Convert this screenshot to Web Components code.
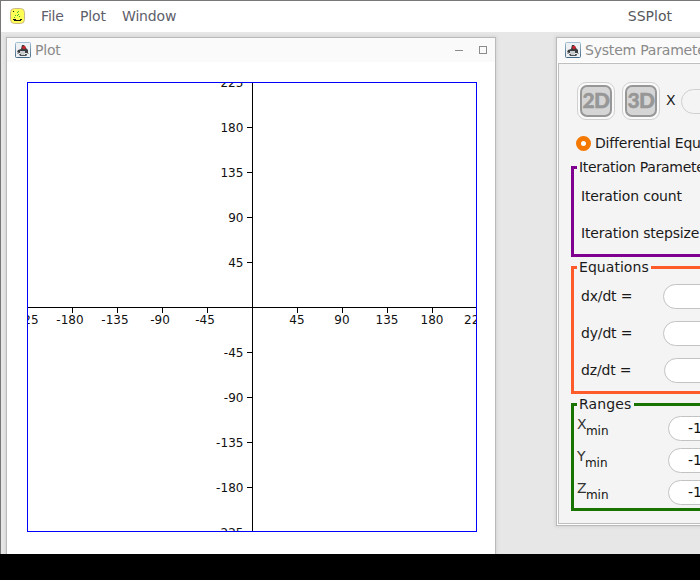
<!DOCTYPE html>
<html lang="en">
<head>
<meta charset="utf-8">
<title>SSPlot</title>
<style>
html, body { margin: 0; height: 580px; overflow: hidden; background: #000; }
body { font: 14px/17px "DejaVu Sans", sans-serif; color: #1a1a1a; }
</style>
</head>
<body>
<ss-app></ss-app>
<script>
const define = (name, html, init) => customElements.define(name, class extends HTMLElement {
  connectedCallback() {
    if (this.shadowRoot) return;
    const root = this.attachShadow({ mode: "open" });
    const t = document.createElement("template");
    t.innerHTML = html;
    root.append(t.content.cloneNode(true));
    if (init) init(this, root);
  }
});

define("ss-logo", `<style>:host{display:block;width:16px;height:16px}svg{display:block}</style>
<svg width="16" height="16" viewBox="0 0 16 16">
<rect x=".5" y=".5" width="14" height="15" rx="4" fill="#ffff56" stroke="#c9b48c"/>
<path d="M3 3h1v1H3zM3 11h3v1h4v-1h2v1h-1v1H4v-1H3z" fill="#111"/>
<path d="M7 4h1v1H7zM8 3h1v1H8zM5 7h1v1H5zM7 7h1v1H7zM9 8h1v1H9zM4 9h1v1H4zM8 6h1v1H8z" fill="#42b82e"/></svg>`);

define("ss-duke", `<style>:host{display:block;width:16px;height:16px}svg{display:block}</style>
<svg width="16" height="16" viewBox="0 0 16 16">
<defs><linearGradient id="g" x2="0" y2="1"><stop stop-color="#a3bfd2"/><stop offset="1" stop-color="#416a8a"/></linearGradient></defs>
<rect x=".5" y=".5" width="15" height="15" rx="1" fill="#eef1f3" stroke="url(#g)"/>
<path d="M7 3H9L11 6 13 8V11H10V9H6V11H4L2 10 3 8 6 7Z" fill="#3c3e41"/>
<path d="M5 9H10V11L9 13H6L5 12Z" fill="#c9cdd0"/>
<path d="M4 12H6V13H10V12H12V13L11 14H5Z" fill="#4e5255"/>
<path d="M2 11H4V12H2ZM12 11H14V12H12Z" fill="#a9adb0"/>
<circle cx="9" cy="5.5" r="1.8" fill="#c9232b"/></svg>`);

define("ss-menubar", `<style>
:host{display:flex;align-items:center;height:31px;background:#fff;color:#5d606b;padding-left:9px;box-sizing:border-box}
ss-logo{margin-top:-1px}
nav{display:flex;margin-left:15px}
nav span{letter-spacing:-.15px}
nav span:nth-child(1){width:39px}nav span:nth-child(2){width:42px}
b{font-weight:400;color:#55585c;margin-left:auto;margin-right:28px;letter-spacing:0}
</style><ss-logo></ss-logo><nav><span>File</span><span>Plot</span><span>Window</span></nav><b>SSPlot</b>`);

define("ss-window", `<style>
:host{display:flex;flex-direction:column;position:absolute;box-sizing:border-box;border:1px solid #bababa;background:#fff;box-shadow:0 0 3px 1px #d4d4d4}
header{display:flex;align-items:center;flex:none;height:24px;padding:0 8px;background:#fafafa;color:#8a8a8a;white-space:nowrap}
header span{margin-left:4px;letter-spacing:-.2px}
.min{width:8px;height:1px;background:#8c8c8c;margin-left:auto}
.max{width:8px;height:8px;box-sizing:border-box;border:1px solid #8c8c8c;margin-left:16px}
</style><header><ss-duke></ss-duke><span></span><i class="min"></i><i class="max"></i></header><slot></slot>`,
(el, root) => root.querySelector("span").textContent = el.getAttribute("caption"));

define("ss-plot", `<style>:host{display:block;padding:20px 0 0 20px}svg{display:block;font-size:12px;letter-spacing:.05px}</style>
<svg width="450" height="450" viewBox="0 0 450 450"><g id="axes" fill="#111"></g>
<rect x=".5" y=".5" width="449" height="449" fill="none" stroke="#00f"/></svg>`,
(el, root) => {
  let s = '<path d="M0 225h450v1H0zM225 0h1v450h-1z" fill="#000"/>';
  for (let v = -225; v <= 225; v += 45) {
    if (!v) continue;
    const p = 225 + v;
    const x = v === 225 ? p - 1.5 : v < 0 ? p - 2 : p;
    s += `<path d="M${p} 226h1v5h-1zM220 ${p}h5v1h-5z" fill="#000"/>`;
    s += `<text x="${x}" y="242" text-anchor="middle">${v}</text>`;
    s += `<text x="216.5" y="${p + 5}" text-anchor="end">${-v}</text>`;
  }
  root.querySelector("#axes").innerHTML = s;
});

define("ss-dimension", `<style>
:host{display:block;box-sizing:border-box;flex:none;width:38px;height:38px;padding:2px;border:1px solid #d1d1d1;border-radius:9px;background:#fafafa}
div{box-sizing:border-box;width:32px;height:32px;border:2px solid #979797;border-radius:7px;background:#d5d5d5;color:#979797;font:900 21px/26px Lato,sans-serif;display:flex;justify-content:center;letter-spacing:-.6px;-webkit-text-stroke:.5px #979797}
</style><div><slot></slot></div>`);

define("ss-field", `<style>
:host{display:block;box-sizing:border-box;flex:none;width:140px;height:25px;border:1px solid #c3c3c3;border-radius:13px;background:#fff;padding:3px 0 0 19px;color:#111}
:host([disabled]){background:#f4f4f4;border-color:#d0d0d0}
</style><slot></slot>`);

define("ss-radio", `<style>
:host{display:flex;align-items:center;white-space:nowrap;letter-spacing:-.2px}
i{box-sizing:border-box;flex:none;width:15px;height:15px;border:5px solid #f57900;border-radius:50%;background:#fff;margin-right:4px}
</style><i></i><slot></slot>`);

define("ss-group", `<style>
:host{display:block}
fieldset{box-sizing:border-box;height:100%;min-width:0;margin:0;padding:var(--pad) 0 0 var(--inset);border:3px solid var(--edge)}
legend{height:17px;margin-left:calc(3px - var(--inset));padding:0 2px;white-space:nowrap;letter-spacing:var(--track,.05px)}
div{display:grid;gap:var(--gap)}
</style><fieldset><legend></legend><div><slot></slot></div></fieldset>`,
(el, root) => root.querySelector("legend").textContent = el.getAttribute("caption"));

define("ss-row", `<style>
:host{display:flex;align-items:center;height:25px;white-space:nowrap;letter-spacing:-.17px}
span{flex:none;width:var(--label,82px)}
</style><span><slot name="label"></slot></span><slot></slot>`);

define("ss-range", `<style>
:host{display:flex;height:25px;color:#333}
div{flex:none;width:91px;padding-top:0;line-height:17px}
small{position:relative;top:6px;font-size:12px;line-height:0;letter-spacing:0;margin-left:-.7px;color:#111}
</style><div><span></span><small>min</small></div><ss-field>-10</ss-field>`,
(el, root) => root.querySelector("span").textContent = el.getAttribute("axis"));

define("ss-params", `<style>
:host{display:block;box-sizing:border-box;flex:1;margin:1px;border:1px solid #bfbfbf;background:#f4f4f4;padding:18px 0 0 12px;overflow:hidden}
.top{display:flex;align-items:center;gap:7px;margin-left:6px;height:38px}
.top span{width:8px;margin:-2px 0 0 -1px}
ss-radio{height:17px;margin:15px 0 7px 5px}
ss-group{--pad:8px;--inset:7px;--gap:12px;width:300px;margin-bottom:2px}
.i{--edge:#7f0090;--track:-.3px;height:98px}.e{--edge:#ff5a29;height:135px}.r{--edge:#197300;--pad:3px;--inset:3px;--gap:7px;--track:.15px;height:115px}
</style>
<div class="top"><ss-dimension>2D</ss-dimension><ss-dimension>3D</ss-dimension><span>X</span><ss-field disabled></ss-field></div>
<ss-radio>Differential Equations</ss-radio>
<ss-group class="i" caption="Iteration Parameters">
<ss-row><span slot="label">Iteration count</span></ss-row><ss-row><span slot="label">Iteration stepsize</span></ss-row></ss-group>
<ss-group class="e" caption="Equations">
<ss-row><span slot="label">dx/dt =</span><ss-field></ss-field></ss-row>
<ss-row><span slot="label">dy/dt =</span><ss-field></ss-field></ss-row>
<ss-row style="--label:83px"><span slot="label">dz/dt =</span><ss-field></ss-field></ss-row></ss-group>
<ss-group class="r" caption="Ranges"><ss-range axis="X"></ss-range><ss-range axis="Y"></ss-range><ss-range axis="Z"></ss-range></ss-group>`);

define("ss-app", `<style>
:host{display:flex;flex-direction:column;box-sizing:border-box;width:700px;height:554px;border:solid #777;border-width:1px 0 0 1px;background:#e7e7e7;overflow:hidden}
main{position:relative;flex:1;overflow:hidden}
.plot{left:5px;top:5px;width:490px;height:540px}
.params{left:555px;top:5px;width:330px;height:489px}
</style><ss-menubar></ss-menubar><main>
<ss-window class="plot" caption="Plot"><ss-plot></ss-plot></ss-window>
<ss-window class="params" caption="System Parameters"><ss-params></ss-params></ss-window></main>`);
</script>
</body>
</html>
